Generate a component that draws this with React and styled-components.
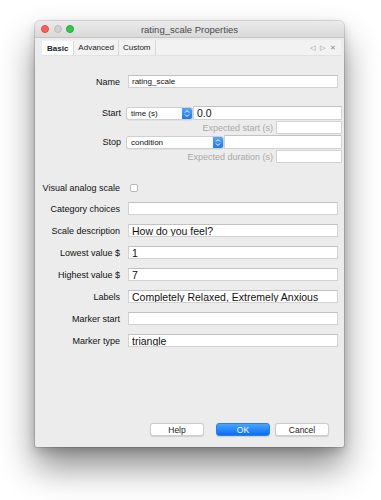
import React from 'react'
import styled, { createGlobalStyle } from 'styled-components'

const GlobalStyle = createGlobalStyle`
  html, body {
    margin: 0;
    padding: 0;
    background: #ffffff;
    font-family: "Liberation Sans", Arial, sans-serif;
  }
`

const fields = [
  { label: 'Category choices', value: '' },
  { label: 'Scale description', value: 'How do you feel?', big: true },
  { label: 'Lowest value $', value: '1', big: true },
  { label: 'Highest value $', value: '7', big: true },
  { label: 'Labels', value: 'Completely Relaxed, Extremely Anxious', big: true },
  { label: 'Marker start', value: '' },
  { label: 'Marker type', value: 'triangle', big: true },
]

const Stepper = () => (
  <svg width="6" height="9" viewBox="0 0 6 9">
    <path d="M1 3.5 L3 1.5 L5 3.5 M1 5.5 L3 7.5 L5 5.5" fill="none" stroke="#fff" strokeWidth="1" />
  </svg>
)

const App = () => {
  return (
    <Page>
      <GlobalStyle />
      <Window>
        <TitleBar>
          <Lights>
            <Light color="#fc605b" border="#de4a45" />
            <Light color="#d0d0d0" border="#bdbdbd" />
            <Light color="#34c84a" border="#25a837" />
          </Lights>
          <Title>rating_scale Properties</Title>
        </TitleBar>

        <TabBar>
          <Tab active>Basic</Tab>
          <Tab>Advanced</Tab>
          <Tab>Custom</Tab>
          <TabTools>
            <span>◁</span>
            <span>▷</span>
            <span>✕</span>
          </TabTools>
        </TabBar>

        <Form>
          <Row>
            <Label>Name</Label>
            <Field>rating_scale</Field>
          </Row>

          <TimeBlock>
            <TimeRow>
              <Label>Start</Label>
              <Select width={67}>
                <span>time (s)</span>
                <Arrow><Stepper /></Arrow>
              </Select>
              <Field big>0.0</Field>
            </TimeRow>
            <SubRow>
              <SubLabel>Expected start (s)</SubLabel>
              <SmallField />
            </SubRow>
            <TimeRow>
              <Label>Stop</Label>
              <Select width={98}>
                <span>condition</span>
                <Arrow><Stepper /></Arrow>
              </Select>
              <Field />
            </TimeRow>
            <SubRow>
              <SubLabel>Expected duration (s)</SubLabel>
              <SmallField />
            </SubRow>
          </TimeBlock>

          <List>
            <CheckRow>
              <Label>Visual analog scale</Label>
              <Check />
            </CheckRow>
            {fields.map((f) => (
              <Row key={f.label}>
                <Label>{f.label}</Label>
                <Field big={f.big}>{f.value}</Field>
              </Row>
            ))}
          </List>
        </Form>

        <Buttons>
          <Button>Help</Button>
          <Button primary>OK</Button>
          <Button>Cancel</Button>
        </Buttons>
      </Window>
    </Page>
  )
}

const Page = styled.div`
  width: 381px;
  height: 500px;
  padding: 21px 0 0 35px;
  box-sizing: border-box;
  overflow: hidden;
  background: #ffffff;
`

const Window = styled.div`
  width: 309px;
  height: 426px;
  background: #ececec;
  border-radius: 5px 5px 2px 2px;
  box-shadow: 0 0 0 1px rgba(0, 0, 0, 0.12), 0 4px 10px rgba(0, 0, 0, 0.18),
    0 20px 34px rgba(0, 0, 0, 0.45);
  display: flex;
  flex-direction: column;
  overflow: hidden;
`

const TitleBar = styled.div`
  height: 16px;
  flex: none;
  position: relative;
  display: flex;
  align-items: center;
  justify-content: center;
  background: linear-gradient(#ebebeb, #d9d9d9);
  border-bottom: 1px solid #c4c4c4;
`

const Lights = styled.div`
  position: absolute;
  left: 6px;
  top: 4px;
  display: flex;
  gap: 4.5px;
`

const Light = styled.span`
  width: 8px;
  height: 8px;
  box-sizing: border-box;
  border-radius: 50%;
  background: ${(p) => p.color};
  border: 0.5px solid ${(p) => p.border};
`

const Title = styled.div`
  font-size: 9.5px;
  color: #4a4a4a;
`

const TabBar = styled.div`
  margin: 2px 3px 0 7px;
  height: 15px;
  display: flex;
  align-items: stretch;
  background: #f2f2f2;
  border-bottom: 1px solid #e2e2e2;
`

const Tab = styled.div`
  padding: 0 ${(p) => (p.active ? 5 : 4)}px;
  display: flex;
  align-items: center;
  font-size: 8px;
  font-weight: ${(p) => (p.active ? 'bold' : 'normal')};
  color: #222;
  background: ${(p) => (p.active ? '#ffffff' : 'transparent')};
  border-right: 1px solid #d8d8d8;
  margin-top: ${(p) => (p.active ? '1px' : '0')};
`

const TabTools = styled.div`
  margin-left: auto;
  display: flex;
  align-items: center;
  gap: 5px;
  padding-right: 5px;
  font-size: 6.5px;
  color: #8a8a8a;
`

const Form = styled.div`
  padding: 19px 6px 0 0;
  display: flex;
  flex-direction: column;
`

const Row = styled.div`
  display: grid;
  grid-template-columns: 85px 1fr;
  column-gap: 8px;
  align-items: center;
  height: 13px;
`

const CheckRow = styled(Row)`
  height: 11px;
`

const Label = styled.div`
  text-align: right;
  font-size: 9px;
  color: #111;
  white-space: nowrap;
`

const Field = styled.div`
  height: 13px;
  box-sizing: border-box;
  background: #ffffff;
  border: 1px solid #d2d2d2;
  border-top-color: #c2c2c2;
  padding: 0 3px;
  display: flex;
  align-items: center;
  font-size: ${(p) => (p.big ? '10.5px' : '8px')};
  color: #111;
  white-space: nowrap;
  overflow: hidden;
`

const TimeBlock = styled.div`
  margin: 18px -4px 0 0;
  display: flex;
  flex-direction: column;
  gap: 1px;
`

const TimeRow = styled.div`
  display: grid;
  grid-template-columns: 86px auto 1fr;
  column-gap: 5px;
  align-items: center;
  height: 14px;

  & > div:last-child {
    height: 14px;
    margin-left: -5px;
  }
`

const Select = styled.div`
  width: ${(p) => p.width}px;
  height: 13px;
  box-sizing: border-box;
  display: flex;
  align-items: center;
  justify-content: space-between;
  background: #ffffff;
  border: 1px solid #cfcfcf;
  border-radius: 3px;
  font-size: 8px;
  color: #111;
  padding-left: 4px;
  overflow: hidden;
  box-shadow: 0 0.5px 0.5px rgba(0, 0, 0, 0.1);
`

const Arrow = styled.div`
  width: 10px;
  height: 13px;
  display: flex;
  align-items: center;
  justify-content: center;
  background: linear-gradient(#5aa8fd, #1775f0);
`

const SubRow = styled.div`
  display: flex;
  justify-content: flex-end;
  align-items: center;
  gap: 3px;
  height: 13px;
`

const SubLabel = styled.div`
  font-size: 9px;
  color: #a9a9a9;
`

const SmallField = styled.div`
  width: 66px;
  height: 13px;
  box-sizing: border-box;
  background: #ffffff;
  border: 1px solid #d2d2d2;
`

const List = styled.div`
  margin-top: 19px;
  display: flex;
  flex-direction: column;
  gap: 9px;
`

const Check = styled.div`
  margin-left: 2px;
  width: 8px;
  height: 8px;
  box-sizing: border-box;
  background: #ffffff;
  border: 1px solid #b9b9b9;
  border-radius: 2px;
`

const Buttons = styled.div`
  margin-top: auto;
  margin-bottom: 11px;
  padding-right: 15px;
  display: flex;
  justify-content: flex-end;
  align-items: center;
`

const Button = styled.div`
  width: 54px;
  height: 13px;
  box-sizing: border-box;
  display: flex;
  align-items: center;
  justify-content: center;
  border-radius: 3px;
  font-size: 8.5px;
  margin-left: ${(p) => (p.primary ? '12px' : '5px')};
  color: ${(p) => (p.primary ? '#ffffff' : '#222')};
  background: ${(p) => (p.primary ? 'linear-gradient(#4aa3fd, #0b6ef5)' : '#ffffff')};
  border: 1px solid ${(p) => (p.primary ? '#2a7ff0' : '#cdcdcd')};
  box-shadow: 0 0.5px 1px rgba(0, 0, 0, 0.12);

  &:first-child {
    margin-left: 0;
  }
`

export default App
